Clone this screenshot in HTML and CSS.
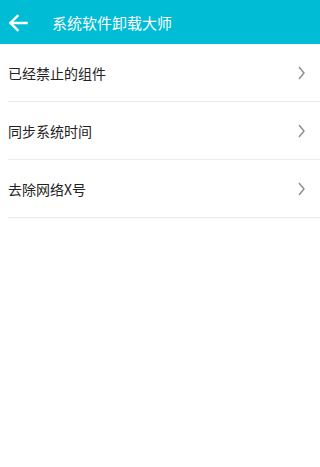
FILE: index.html
```html
<!DOCTYPE html>
<html lang="zh">
<head>
<meta charset="utf-8">
<title>系统软件卸载大师</title>
<link rel="stylesheet" href="styles.css">
</head>
<body>
<header class="appbar">
  <svg class="back" width="20" height="18" viewBox="0 0 20 18">
    <path d="M18.5 9 H2.5 M9.5 2 L2.5 9 L9.5 16" fill="none" stroke="#fff" stroke-width="2.4" stroke-linecap="square"/>
  </svg>
  <h1 class="title">系统软件卸载大师</h1>
</header>
<ul class="list">
  <li class="item"><span class="label">已经禁止的组件</span><svg class="chev" width="7" height="14" viewBox="0 0 7 14"><path d="M1 1 L6 7 L1 13" fill="none" stroke="#8a8a8a" stroke-width="1.4"/></svg></li>
  <li class="item"><span class="label">同步系统时间</span><svg class="chev" width="7" height="14" viewBox="0 0 7 14"><path d="M1 1 L6 7 L1 13" fill="none" stroke="#8a8a8a" stroke-width="1.4"/></svg></li>
  <li class="item"><span class="label">去除网络X号</span><svg class="chev" width="7" height="14" viewBox="0 0 7 14"><path d="M1 1 L6 7 L1 13" fill="none" stroke="#8a8a8a" stroke-width="1.4"/></svg></li>
</ul>
</body>
</html>
```
FILE: styles.css
```css
html, body {
  margin: 0;
  padding: 0;
  background: #fff;
  font-family: "Noto Sans CJK SC", "Noto Sans", sans-serif;
}
.appbar {
  height: 44px;
  background: #00bcd4;
  display: flex;
  align-items: center;
  padding-left: 8px;
  box-sizing: border-box;
}
.back {
  display: block;
  margin-top: 1px;
}
.title {
  margin: 0 0 0 24px;
  font-size: 15px;
  font-weight: normal;
  color: #fff;
  line-height: 1;
}
.list {
  list-style: none;
  margin: 0;
  padding: 0;
}
.item {
  height: 57px;
  margin-left: 8px;
  border-bottom: 1px solid #ebebeb;
  display: flex;
  align-items: center;
  justify-content: space-between;
  padding-right: 15px;
}
.label {
  font-size: 14px;
  color: #222;
  line-height: 1;
}
.chev {
  display: block;
}
```
